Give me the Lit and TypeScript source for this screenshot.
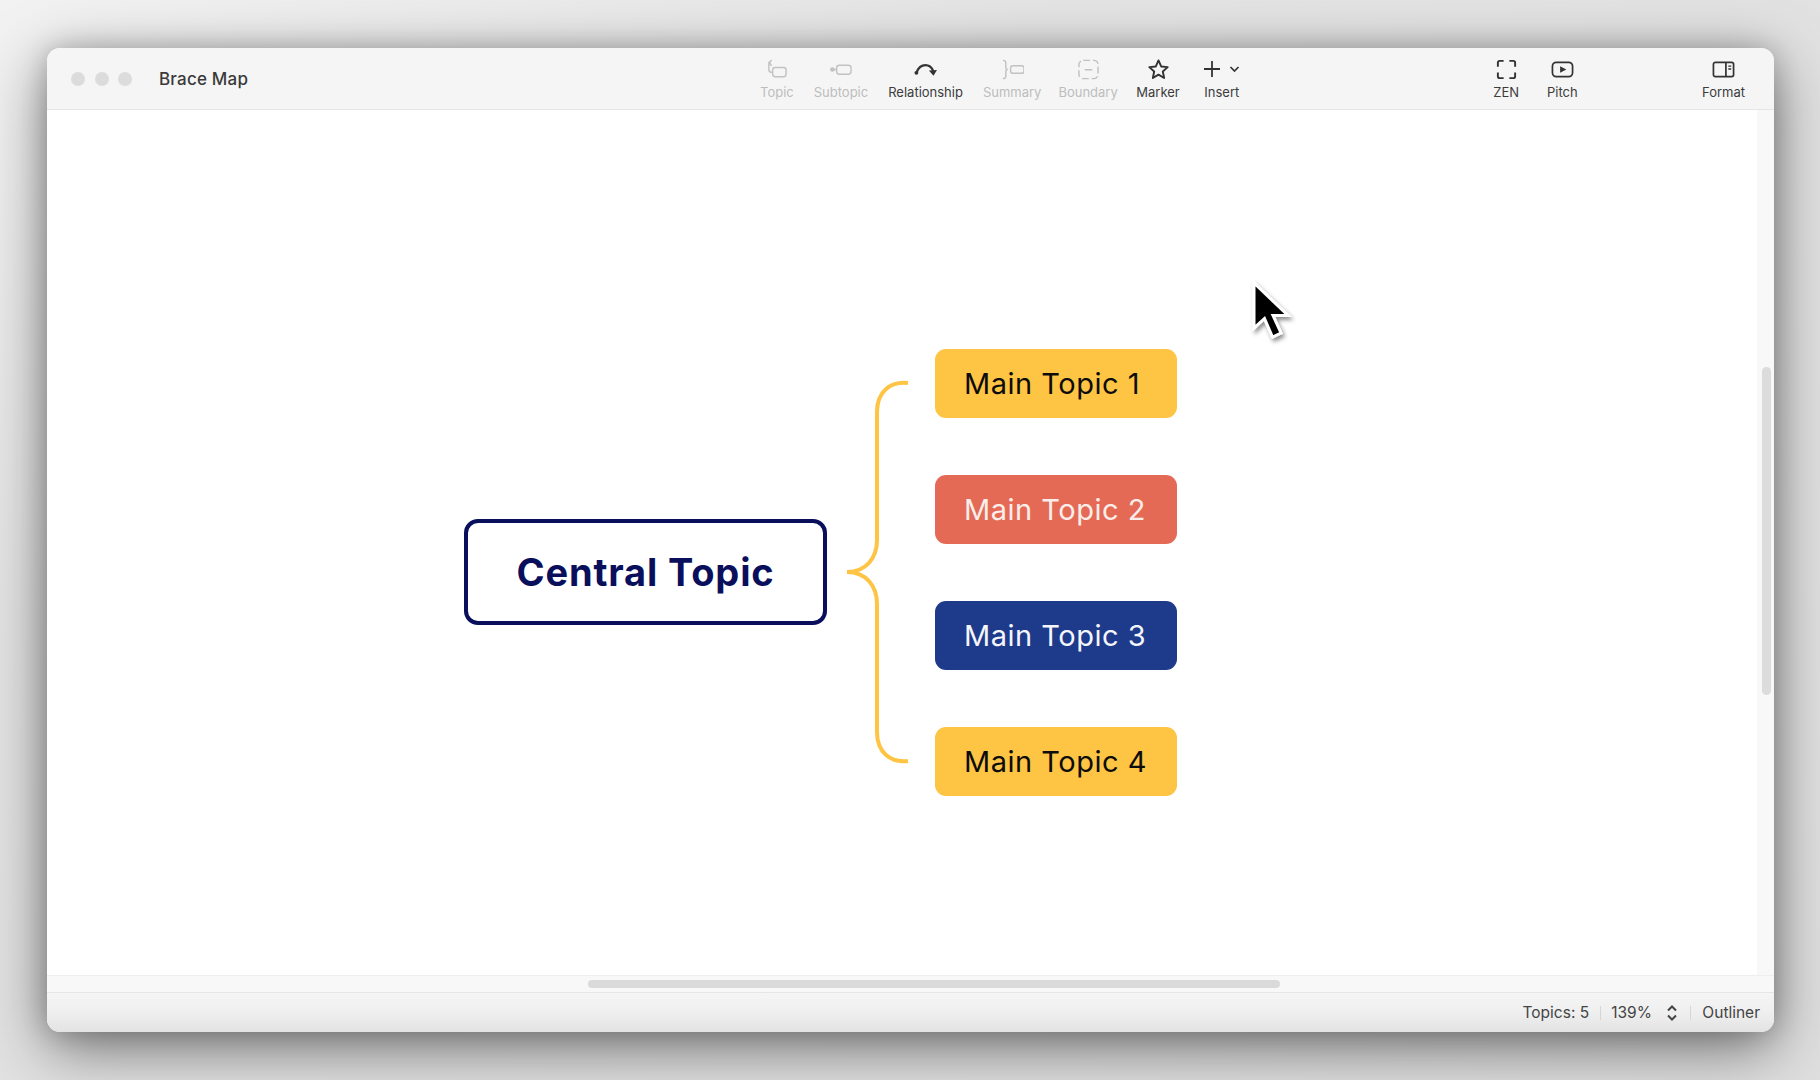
import { LitElement, html, css, svg } from "lit";
import { customElement } from "lit/decorators.js";

const ICONS: Record<string, unknown> = {
  topic: svg`<path d="M7 2 4 5l3 3M4.500 5H6M4 5.500V12a3 3 0 0 0 3 3h1" fill="none"/><rect x="8" y="10" width="14" height="9.500" rx="2.500" fill="none"/>`,
  subtopic: svg`<circle cx="3.500" cy="12" r="2.400" fill="currentColor" stroke="none"/><path d="M5 12h3" fill="none"/><rect x="8" y="7.500" width="15" height="9.500" rx="2.800" fill="none"/>`,
  relationship: svg`<path d="M2.500 15.500C4.500 10 8 7.500 12 7.500S18.500 10 20 13.500" fill="none" stroke-width="2.300"/><circle cx="2.500" cy="15.500" r="2" fill="currentColor" stroke="none"/><path d="M15.500 13 24 12.500 20.300 18.500Z" fill="currentColor" stroke="none"/>`,
  summary: svg`<path d="M2 2.500c2.500 0 3 .8 3 2.500v4.500C5 11 5.500 12 7 12c-1.500 0-2 1-2 2.500V19c0 1.700-.5 2.500-3 2.500" fill="none"/><rect x="10" y="8" width="14" height="8" rx="2.500" fill="none"/>`,
  boundary: svg`<rect x="2" y="2.500" width="20" height="19" rx="4.500" fill="none" stroke-dasharray="7 3"/><path d="M8 12.200h8" fill="none"/>`,
  marker: svg`<path d="m12 2.500 2.800 6.300 6.800.700-5.100 4.600 1.400 6.800L12 17.400l-5.900 3.500 1.400-6.800-5.100-4.600 6.800-.7Z" fill="none" stroke-width="2" stroke-linejoin="round"/>`,
  zen: svg`<path d="M3 9V5a2 2 0 0 1 2-2h4M15 3h4a2 2 0 0 1 2 2v4M21 15v4a2 2 0 0 1-2 2h-4M9 21H5a2 2 0 0 1-2-2v-4" fill="none" stroke-width="2"/>`,
  pitch: svg`<rect x="1.500" y="4.500" width="21" height="15" rx="4" fill="none" stroke-width="1.800"/><path d="M9.500 8.500v7l6.500-3.500Z" fill="currentColor" stroke="none"/>`,
  format: svg`<rect x="1.500" y="4.500" width="21" height="15" rx="2" fill="none" stroke-width="1.800"/><path d="M14.500 4.500v15" fill="none" stroke-width="1.800"/><path d="M17 8.500h3M17 11.500h3" fill="none" stroke-width="1.500"/>`,
};

const LEFT_TOOLS = [
  { id: "topic", label: "Topic", off: true, extra: "" },
  { id: "subtopic", label: "Subtopic", off: true, extra: "" },
  { id: "relationship", label: "Relationship", off: false, extra: "" },
  { id: "summary", label: "Summary", off: true, extra: "" },
  { id: "boundary", label: "Boundary", off: true, extra: "snug-a" },
  { id: "marker", label: "Marker", off: false, extra: "snug-b" },
];

// Node places on the free diagram canvas, in canvas coordinates.
const TOPICS = [
  { label: "Main Topic 1", top: 239, cls: "yellow" },
  { label: "Main Topic 2", top: 365, cls: "red" },
  { label: "Main Topic 3", top: 491, cls: "blue" },
  { label: "Main Topic 4", top: 617, cls: "yellow" },
];

@customElement("app-root")
export class AppRoot extends LitElement {
  static styles = css`
    :host {
      display: block;
      width: 1820px;
      height: 1080px;
      box-sizing: border-box;
      padding: 48px 46px 48px 47px;
      background: radial-gradient(ellipse at 0% 0%, #f2f2f2 0, #e4e4e4 40%, #dfdfdf 100%);
      font-family: Inter, "Liberation Sans", sans-serif;
      overflow: hidden;
    }
    .window {
      height: 100%;
      display: flex;
      flex-direction: column;
      border-radius: 13px;
      overflow: hidden;
      background: #f6f6f6;
      box-shadow: 0 16px 60px rgba(0, 0, 0, 0.5), 0 0 26px rgba(0, 0, 0, 0.18);
    }
    .toolbar {
      height: 62px;
      flex: none;
      display: flex;
      align-items: center;
      box-sizing: border-box;
      background: #f5f5f5;
      border-bottom: 1px solid #e6e6e6;
    }
    .lead {
      width: 713px;
      flex: none;
      display: flex;
      align-items: center;
      box-sizing: border-box;
      padding-left: 24px;
    }
    .lights { display: flex; gap: 9.500px; }
    .light { width: 14px; height: 14px; border-radius: 50%; background: #dcdcdc; }
    .title { margin-left: 27px; font-size: 17px; font-weight: 500; letter-spacing: 0.200px; color: #3a3a3a; }
    .tools { display: flex; gap: 20px; }
    .views { display: flex; gap: 28px; margin-left: 253px; }
    .format-slot { margin-left: auto; padding-right: 29px; }
    .tool {
      display: flex;
      flex-direction: column;
      align-items: center;
      color: #333;
      font-size: 13px;
      line-height: 16px;
      padding-top: 2px;
    }
    .tool.snug-a { margin-left: -3px; }
    .tool.snug-b { margin-left: -1.500px; }
    .tool.wide-gap { margin-left: 3.500px; }
    .tool .lbl { color: #555; margin-top: 5px; white-space: nowrap; }
    .tool.strong .lbl { color: #3c3c3c; }
    .tool.off { color: #c2c2c2; }
    .tool.off .lbl { color: #bdbdbd; }
    .ico { width: 23px; height: 23px; margin: -1.500px 0; display: block; stroke: currentColor; stroke-width: 1.500; }
    .insert-ico { display: flex; align-items: center; gap: 8px; height: 20px; }
    .insert-ico svg { display: block; }
    .body { height: 865px; flex: none; display: flex; }
    .canvas {
      flex: 1;
      position: relative;
      background: #fff;
      overflow: hidden;
    }
    .wire { position: absolute; left: 0; top: 0; }
    .node {
      position: absolute;
      display: flex;
      align-items: center;
      box-sizing: border-box;
      white-space: nowrap;
    }
    .central {
      left: 417px;
      top: 409px;
      width: 363px;
      height: 106px;
      justify-content: center;
      border: 4.500px solid #0a0f5c;
      border-radius: 14px;
      background: #fff;
      color: #0a0f5c;
      font-size: 38px;
      font-weight: 700;
      letter-spacing: 0.850px;
    }
    .topic {
      left: 888px;
      width: 242px;
      height: 69px;
      padding-left: 29px;
      border-radius: 11px;
      font-size: 29px;
      font-weight: 400;
      letter-spacing: 0.500px;
    }
    .yellow { background: #fec443; color: #0c0c0c; }
    .red { background: #e46a56; color: #fbeeea; }
    .blue { background: #1e3a8a; color: #f4f6fb; }
    .cursor { position: absolute; left: 1201px; top: 170px; }
    .vgutter {
      width: 17px;
      flex: none;
      position: relative;
      background: #f8f8f8;
    }
    .vthumb {
      position: absolute;
      left: 5px;
      top: 257px;
      width: 9px;
      height: 328px;
      border-radius: 5px;
      background: #dcdcdc;
    }
    .hgutter {
      height: 18px;
      flex: none;
      box-sizing: border-box;
      position: relative;
      background: #f8f8f8;
      border-top: 1px solid #efefef;
      border-bottom: 1px solid #e6e6e6;
      padding: 4px 0 0 541px;
    }
    .hthumb { width: 692px; height: 8px; border-radius: 4px; background: #dadada; }
    .status {
      flex: 1;
      display: flex;
      align-items: center;
      justify-content: flex-end;
      padding-right: 14px;
      font-size: 15.500px;
      color: #444;
      background: linear-gradient(#f5f5f5 0, #efefef 50%, #e3e3e3 100%);
    }
    .sep { width: 1px; height: 14px; background: #d6d6d6; margin: 0 10.500px; }
    .zoom { display: flex; align-items: center; gap: 14px; }
    .zoom svg { display: block; }
    .sep.tail { margin: 0 11.500px 0 12px; }
  `;

  private tool(id: string, label: string, off: boolean, extra = "") {
    return html`<div class="tool ${off ? "off" : "strong"} ${extra}">
      <svg class="ico" viewBox="0 0 24 24">${ICONS[id]}</svg>
      <span class="lbl">${label}</span>
    </div>`;
  }

  render() {
    return html`<div class="window">
      <header class="toolbar">
        <div class="lead">
          <div class="lights"><i class="light"></i><i class="light"></i><i class="light"></i></div>
          <div class="title">Brace Map</div>
        </div>
        <div class="tools">
          ${LEFT_TOOLS.map((t) => this.tool(t.id, t.label, t.off, t.extra))}
          <div class="tool strong wide-gap">
            <div class="insert-ico">
              <svg width="18" height="18" viewBox="0 0 18 18"><path d="M9 1v16M1 9h16" stroke="#333" stroke-width="1.800" fill="none"/></svg>
              <svg width="11" height="8" viewBox="0 0 11 8"><path d="M1.500 2 5.500 6 9.500 2" stroke="#333" stroke-width="1.700" fill="none"/></svg>
            </div>
            <span class="lbl">Insert</span>
          </div>
        </div>
        <div class="views">
          ${this.tool("zen", "ZEN", false)} ${this.tool("pitch", "Pitch", false)}
        </div>
        <div class="format-slot">${this.tool("format", "Format", false)}</div>
      </header>
      <div class="body">
        <main class="canvas">
          <svg class="wire" width="1709" height="865" viewBox="47 110 1709 865">
            <path
              d="M908 383C890 381 877 392 877 412V540C877 558 866 572 847 572C866 572 877 586 877 604V732C877 752 890 763 908 761"
              fill="none"
              stroke="#fec443"
              stroke-width="4"
            />
          </svg>
          <div class="node central">Central Topic</div>
          ${TOPICS.map(
            (t) => html`<div class="node topic ${t.cls}" style="top:${t.top}px">${t.label}</div>`
          )}
          <svg class="cursor" width="48" height="66" viewBox="0 0 48 66">
            <defs>
              <filter id="cs" x="-30%" y="-30%" width="160%" height="160%">
                <feDropShadow dx="2" dy="3" stdDeviation="2" flood-color="#000" flood-opacity=".45" />
              </filter>
            </defs>
            <path
              d="M6 3V48L16.500 38.500 24.500 57 33 53 25 35.500H40Z"
              fill="#000"
              stroke="#fff"
              stroke-width="3"
              stroke-linejoin="miter"
              filter="url(#cs)"
            />
          </svg>
        </main>
        <div class="vgutter"><div class="vthumb"></div></div>
      </div>
      <div class="hgutter"><div class="hthumb"></div></div>
      <footer class="status">
        <span>Topics: 5</span>
        <i class="sep"></i>
        <div class="zoom">
          <span>139%</span>
          <svg width="12" height="18" viewBox="0 0 12 18">
            <path d="M2 6.500 6 2.500 10 6.500M2 11.500 6 15.500 10 11.500" stroke="#444" stroke-width="2" fill="none" />
          </svg>
        </div>
        <i class="sep tail"></i>
        <span>Outliner</span>
      </footer>
    </div>`;
  }
}
